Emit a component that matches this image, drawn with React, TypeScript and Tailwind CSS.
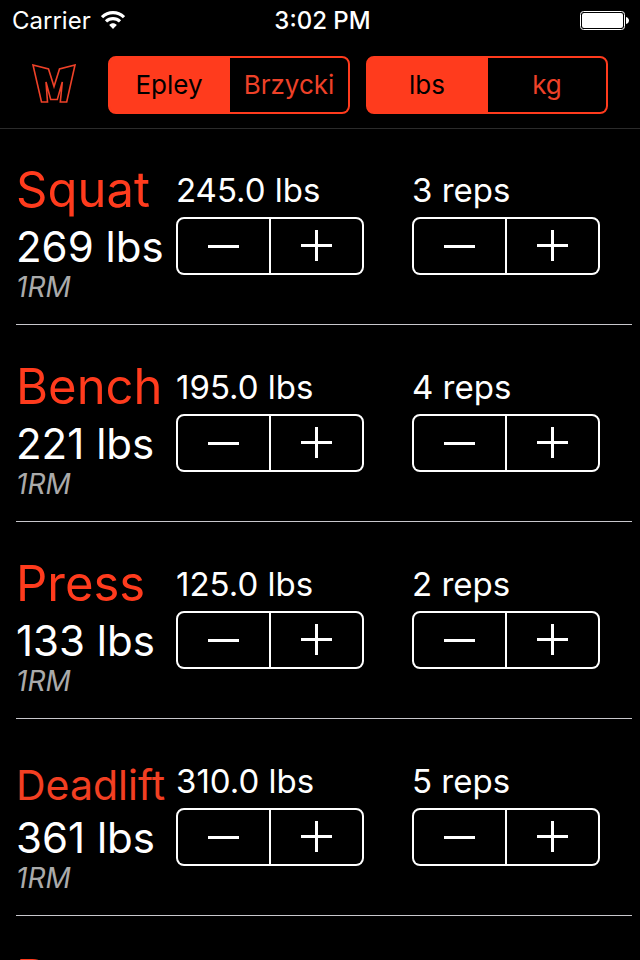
import React, { useState } from 'react';

type Formula = 'Epley' | 'Brzycki';
type Unit = 'lbs' | 'kg';

// Define the shape of a lift
interface Lift {
  name: string;
  weight: number;
  reps: number;
  compact?: boolean;
}

const initialLifts: Lift[] = [
  { name: 'Squat', weight: 245, reps: 3 },
  { name: 'Bench', weight: 195, reps: 4 },
  { name: 'Press', weight: 125, reps: 2 },
  { name: 'Deadlift', weight: 310, reps: 5, compact: true },
  { name: 'Row', weight: 135, reps: 5 },
];

const oneRepMax = (lift: Lift, formula: Formula) => {
  if (formula === 'Epley') {
    return Math.floor(lift.weight * (1 + lift.reps / 30));
  }
  return Math.floor((lift.weight * 36) / (37 - lift.reps));
};

const toUnit = (lbs: number, unit: Unit) => (unit === 'lbs' ? lbs : lbs / 2.2046);

const StatusBar: React.FC = () => (
  <div className="grid h-[42px] grid-cols-3 items-center pl-3 pr-[11px] text-2xl">
    <div className="flex items-center gap-[10px]">
      <span>Carrier</span>
      <svg width="24" height="20" viewBox="0 0 24 20" fill="none" stroke="currentColor" strokeWidth="3.2">
        <path d="M1 6.2C7.2 0.2 16.8 0.2 23 6.2" />
        <path d="M5 10.4C9 6.6 15 6.6 19 10.4" />
        <path d="M8.2 14C10.4 11.6 13.6 11.6 15.8 14L12 18Z" fill="currentColor" stroke="none" />
      </svg>
    </div>
    <span className="pl-1 text-center font-medium">3:02 PM</span>
    <svg className="justify-self-end" width="49" height="20" viewBox="0 0 49 20">
      <rect x="0.5" y="0.5" width="44" height="18" rx="3" fill="none" stroke="currentColor" />
      <rect x="2" y="2" width="41" height="15" rx="2" fill="currentColor" />
      <path d="M46 6C50 7 50 12 46 13Z" fill="currentColor" />
    </svg>
  </div>
);

interface SegmentedProps<T extends string> {
  label: string;
  options: T[];
  value: T;
  onChange: (value: T) => void;
}

function Segmented<T extends string>({ label, options, value, onChange }: SegmentedProps<T>) {
  return (
    <div
      role="group"
      aria-label={label}
      className="grid h-[58px] flex-1 grid-cols-2 gap-0.5 overflow-hidden rounded-lg border-2 border-[#ff3b1d] bg-[#ff3b1d] text-[26px]"
    >
      {options.map((option) => (
        <button
          key={option}
          type="button"
          aria-pressed={option === value}
          className={option === value ? 'bg-[#ff3b1d] pb-0.5 text-black' : 'bg-black pb-0.5 text-[#ee4128]'}
          onClick={() => onChange(option)}
        >
          {option}
        </button>
      ))}
    </div>
  );
}

interface StepperProps {
  text: string;
  name: string;
  onStep: (direction: number) => void;
}

const Stepper: React.FC<StepperProps> = ({ text, name, onStep }) => (
  <div role="group" aria-label={name}>
    <div className="text-[33px] leading-[42px]">{text}</div>
    <div className="mt-1.5 grid h-[58px] w-[188px] grid-cols-2 gap-0.5 overflow-hidden rounded-lg border-2 border-white bg-white">
      <button
        type="button"
        aria-label={`Decrease ${name}`}
        className="flex items-center justify-center bg-black"
        onClick={() => onStep(-1)}
      >
        <svg width="31" height="32" viewBox="0 0 31 32" stroke="currentColor" strokeWidth="3">
          <path d="M0 16.5H31" />
        </svg>
      </button>
      <button
        type="button"
        aria-label={`Increase ${name}`}
        className="flex items-center justify-center bg-black"
        onClick={() => onStep(1)}
      >
        <svg width="31" height="32" viewBox="0 0 31 32" stroke="currentColor" strokeWidth="3">
          <path d="M0 15.5H31M15.5 0V31" />
        </svg>
      </button>
    </div>
  </div>
);

const App: React.FC = () => {
  const [formula, setFormula] = useState<Formula>('Epley');
  const [unit, setUnit] = useState<Unit>('lbs');
  const [lifts, setLifts] = useState(initialLifts);

  const updateLift = (index: number, changes: Partial<Lift>) => {
    setLifts(lifts.map((lift, i) => (i === index ? { ...lift, ...changes } : lift)));
  };

  return (
    <div className="flex h-screen flex-col overflow-hidden bg-black font-['Inter',sans-serif] text-white">
      <header className="-mb-px shrink-0 border-b border-[#2b2b2b]">
        <StatusBar />
        <div className="flex items-center gap-4 px-8 py-[14px]">
          <svg className="mr-4 shrink-0" width="44" height="42" viewBox="0 0 44 42" fill="none" stroke="#ee4128" strokeWidth="1.6">
            <path d="M1 1L16.5 5L22 22.5L27.5 5L43 1L34.7 38H28.3L30.3 18L25.3 35.5H18.7L14 18L15.5 38H9.5Z" />
          </svg>
          <Segmented label="Formula" options={['Epley', 'Brzycki']} value={formula} onChange={setFormula} />
          <Segmented label="Unit" options={['lbs', 'kg']} value={unit} onChange={setUnit} />
        </div>
      </header>

      <main className="min-h-0 flex-1 overflow-hidden pl-4 pr-2">
        {lifts.map((lift, index) => (
          <section key={lift.name} className="flex h-[197px] border-b border-[#c8c7cc] pt-[41px]">
            <div className="w-40 shrink-0 whitespace-nowrap">
              <h2
                className={
                  lift.compact
                    ? 'pb-2 pt-1 text-[41px] leading-[42px] text-[#f23f22]'
                    : 'pb-3 text-[49px] leading-[42px] text-[#ff3b1d]'
                }
              >
                {lift.name}
              </h2>
              <p className="text-[42px] leading-[48px]">
                {Math.round(toUnit(oneRepMax(lift, formula), unit))} {unit}
              </p>
              <p className="text-[28px] italic leading-8 text-[#aaaaaa]">1RM</p>
            </div>
            <div className="w-[236px] shrink-0">
              <Stepper
                name={`${lift.name} weight`}
                text={`${toUnit(lift.weight, unit).toFixed(1)} ${unit}`}
                onStep={(direction) => updateLift(index, { weight: Math.max(0, lift.weight + direction * 5) })}
              />
            </div>
            <Stepper
              name={`${lift.name} reps`}
              text={`${lift.reps} reps`}
              onStep={(direction) => updateLift(index, { reps: Math.max(1, lift.reps + direction) })}
            />
          </section>
        ))}
      </main>
    </div>
  );
};

export default App;
